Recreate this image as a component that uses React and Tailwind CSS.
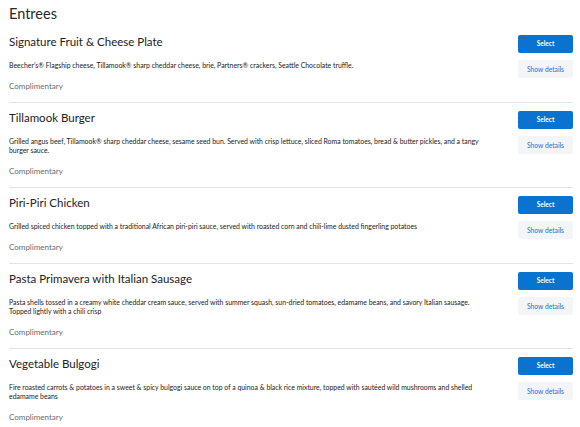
import React from 'react';

const items = [
  {
    name: 'Signature Fruit & Cheese Plate',
    desc: 'Beecher’s® Flagship cheese, Tillamook® sharp cheddar cheese, brie, Partners® crackers, Seattle Chocolate truffle.',
  },
  {
    name: 'Tillamook Burger',
    desc: 'Grilled angus beef, Tillamook® sharp cheddar cheese, sesame seed bun. Served with crisp lettuce, sliced Roma tomatoes, bread & butter pickles, and a tangy burger sauce.',
  },
  {
    name: 'Piri-Piri Chicken',
    desc: 'Grilled spiced chicken topped with a traditional African piri-piri sauce, served with roasted corn and chili-lime dusted fingerling potatoes',
  },
  {
    name: 'Pasta Primavera with Italian Sausage',
    desc: 'Pasta shells tossed in a creamy white cheddar cream sauce, served with summer squash, sun-dried tomatoes, edamame beans, and savory Italian sausage. Topped lightly with a chili crisp',
  },
  {
    name: 'Vegetable Bulgogi',
    desc: 'Fire roasted carrots & potatoes in a sweet & spicy bulgogi sauce on top of a quinoa & black rice mixture, topped with sautéed wild mushrooms and shelled edamame beans',
  },
];

export default function App() {
  return (
    <div className="min-h-[427px] bg-white pl-[9px] pr-[7px] pt-[4px] font-['Lato','Liberation_Sans',sans-serif] text-[#222]">
      <h2 className="text-[14.5px] leading-[20px] text-[#2a2a2a]">Entrees</h2>

      <div className="mt-[3px]">
        {items.map((item, i) => (
          <div
            key={item.name}
            className={`flex justify-between pt-[8px] pb-[10px] ${i > 0 ? 'border-t border-[#e4e4e4]' : ''}`}
          >
            <div className="flex-1">
              <div className="text-[11.5px] leading-[14px] text-[#222]">{item.name}</div>
              <p className="mt-[12px] max-w-[472px] text-[6.9px] leading-[9px] text-[#222]">
                {item.desc}
              </p>
              <div className="mt-[10px] text-[8px] leading-[12px] text-[#6b6b6b]">Complimentary</div>
            </div>

            <div className="flex w-[55px] shrink-0 flex-col gap-[7px]">
              <button className="h-[18px] rounded-[2px] bg-[#0a73cf] text-[6.5px] font-bold text-white">
                Select
              </button>
              <button className="h-[18px] rounded-[2px] bg-[#f4f5f6] text-[6.7px] text-[#1a73c9]">
                Show details
              </button>
            </div>
          </div>
        ))}
      </div>
    </div>
  );
}
